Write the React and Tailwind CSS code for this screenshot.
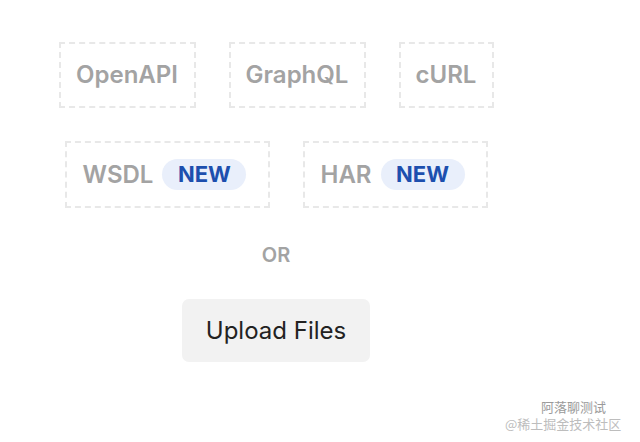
export default function App() {
  const font = { fontFamily: "Inter, 'Noto Sans', sans-serif" };
  const Box = ({ children, cls = "" }) => (
    <div className={`flex h-[66px] items-center gap-[9px] border-2 border-dashed border-[#e8e8e8] px-[16px] text-[24px] font-semibold text-[#a3a3a3] ${cls}`}>
      {children}
    </div>
  );
  const Badge = () => (
    <span className="flex h-[31px] w-[84px] items-center justify-center rounded-full bg-[#e9effb] text-[22px] font-bold text-[#1d4fae]">NEW</span>
  );
  return (
    <div className="relative h-[442px] w-[640px] overflow-hidden bg-white" style={font}>
      <div className="flex w-[552px] flex-col items-center pt-[42px]">
        <div className="flex gap-[33px]">
          <Box cls="w-[137px] justify-center">OpenAPI</Box>
          <Box cls="w-[137px] justify-center">GraphQL</Box>
          <Box cls="w-[95px] justify-center">cURL</Box>
        </div>
        <div className="mt-[33px] flex gap-[33px]">
          <Box cls="w-[205px] h-[67px] justify-start">WSDL<Badge /></Box>
          <Box cls="w-[185px] h-[67px] justify-start">HAR<Badge /></Box>
        </div>
        <div className="mt-[32px] text-[20px] font-semibold text-[#a3a3a3]">OR</div>
        <button className="mt-[29px] h-[63px] w-[188px] rounded-[7px] bg-[#f2f2f2] text-[24px] text-[#222]">Upload Files</button>
      </div>
      <div className="absolute left-[505px] top-[400px] flex flex-col gap-[4px] text-[13px] leading-[13px] text-[#bdbdbd]" style={{ fontFamily: "'Noto Sans CJK SC', sans-serif" }}>
        <div className="pl-[36px] text-[#9a9a9a]">阿落聊测试</div>
        <div>@稀土掘金技术社区</div>
      </div>
    </div>
  );
}
